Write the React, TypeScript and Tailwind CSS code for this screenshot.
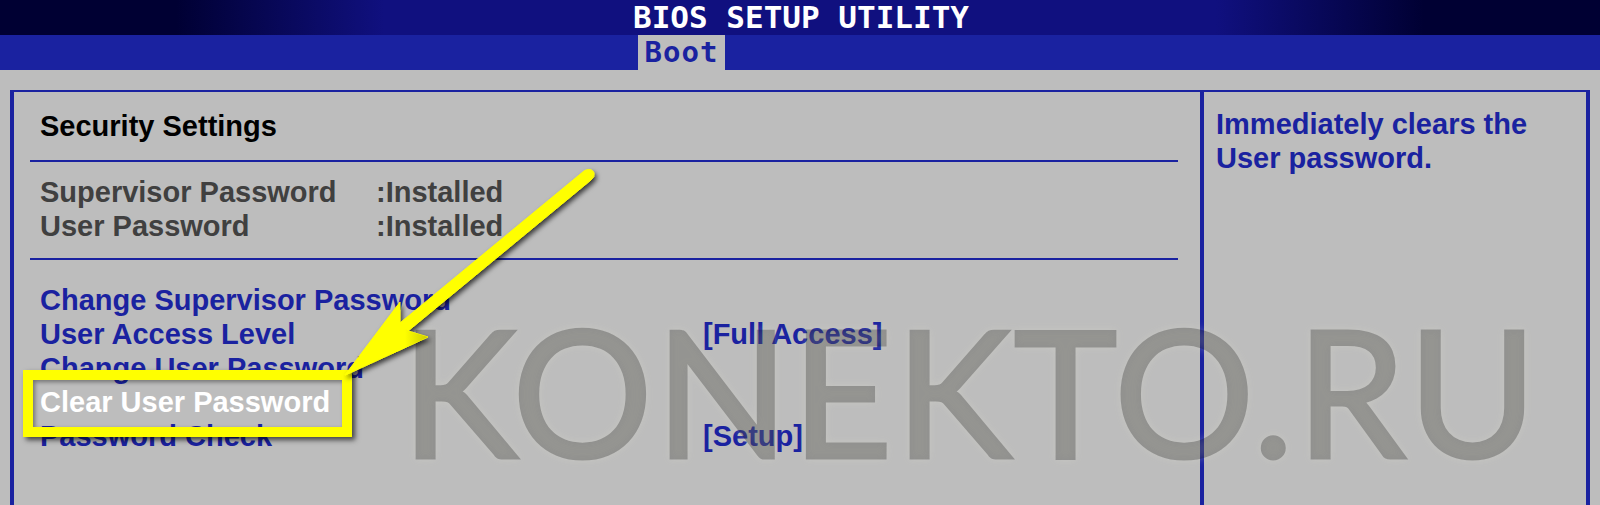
const SETTINGS = [
  { label: "Change Supervisor Password", value: "" },
  { label: "User Access Level", value: "[Full Access]" },
  { label: "Change User Password", value: "" },
  { label: "Clear User Password", value: "", active: true },
  { label: "Password Check", value: "[Setup]" },
];

const BLUE = "text-[#1a22a0]";

export default function App() {
  return (
    <div className="relative h-[505px] w-[1600px] overflow-hidden bg-[#bdbdbd] font-['Liberation_Sans',Arial,sans-serif] font-bold">
      {/* Title bar */}
      <div className="flex h-[35px] items-center justify-center bg-[linear-gradient(90deg,#000033_0%,#000033_11%,#10107f_24%,#10107f_76%,#000033_89%,#000033_100%)]">
        <span className="pl-[2px] font-['DejaVu_Sans_Mono',monospace] text-[31px] leading-none text-white">
          BIOS SETUP UTILITY
        </span>
      </div>

      {/* Tabs */}
      <div className="flex h-[35px] bg-[#1a22a0] pl-[638px]">
        <div className="flex h-full w-[87px] items-center justify-center bg-[#bdbdbd] font-['DejaVu_Sans_Mono',monospace] text-[29px] leading-none tracking-[1px] text-[#1a22a0]">
          Boot
        </div>
      </div>

      {/* Main frame, open at the bottom */}
      <div className="ml-[10px] mt-[20px] flex h-[415px] w-[1580px] border-x-4 border-t-2 border-[#1a22a0]">
        <div className="w-[1190px] border-r-4 border-[#1a22a0] pl-[16px] pr-[22px]">
          <h1 className="flex h-[68px] items-center pl-[10px] text-[29px] leading-none text-black">
            Security Settings
          </h1>
          <div className="h-[2px] bg-[#1a22a0]" />

          <div className="pl-[10px] pt-[13px] text-[29px] leading-[34px] text-[#404040]">
            <div className="flex">
              <span className="w-[336px]">Supervisor Password</span>
              <span>:Installed</span>
            </div>
            <div className="flex">
              <span className="w-[336px]">User Password</span>
              <span>:Installed</span>
            </div>
          </div>
          <div className="mt-[15px] h-[2px] bg-[#1a22a0]" />

          <div className="pl-[10px] pt-[23px] text-[29px] leading-[34px]">
            {SETTINGS.map((s) => (
              <div key={s.label} className={`flex ${s.active ? "text-white" : BLUE}`}>
                <span className="w-[663px] shrink-0">{s.label}</span>
                <span>{s.value}</span>
              </div>
            ))}
          </div>
        </div>

        <div className={`flex-1 pl-[12px] pt-[15px] text-[29px] leading-[34px] ${BLUE}`}>
          Immediately clears the
          <br />
          User password.
        </div>
      </div>

      {/* Watermark */}
      <div className="pointer-events-none absolute left-[401px] top-[280px] drop-shadow-[0_0_4px_#e4e4d0]">
        <div className="font-['Lato',sans-serif] text-[176px] font-normal leading-[220px] tracking-[2px] whitespace-nowrap text-black opacity-[0.25] [-webkit-text-stroke:3px_#000]">
          KONEKTO.RU
        </div>
      </div>

      {/* Highlight box */}
      <div className="absolute left-[23px] top-[370px] h-[67px] w-[329px] border-[10px] border-[#ffff00] shadow-[3px_3px_5px_rgba(0,0,0,0.65),inset_2px_2px_4px_rgba(0,0,0,0.4)]" />

      {/* Arrow */}
      <svg className="pointer-events-none absolute left-0 top-0" width="1600" height="505" viewBox="0 0 1600 505">
        <defs>
          <filter id="arrow-shadow" x="-10%" y="-10%" width="120%" height="120%">
            <feDropShadow dx="2" dy="3" stdDeviation="2.5" floodColor="#000" floodOpacity="0.7" />
          </filter>
          <linearGradient id="barb" gradientUnits="userSpaceOnUse" x1="405" y1="0" x2="430" y2="0">
            <stop offset="0" stopColor="#ffff00" />
            <stop offset="1" stopColor="#c8c800" />
          </linearGradient>
        </defs>
        <path
          filter="url(#arrow-shadow)"
          fill="#ffff00"
          stroke="#ffff00"
          strokeWidth="1"
          strokeLinejoin="round"
          d="M586 170 Q592 168 594 173 Q595 177 591 180 L408 331 L428 337 L352 372 L345 375 L400 302 L400 323 L584 171 Z"
        />
        <path fill="url(#barb)" d="M400 323 L408 331 L428 337 L392 354 L385 340 Z" />
      </svg>
    </div>
  );
}
